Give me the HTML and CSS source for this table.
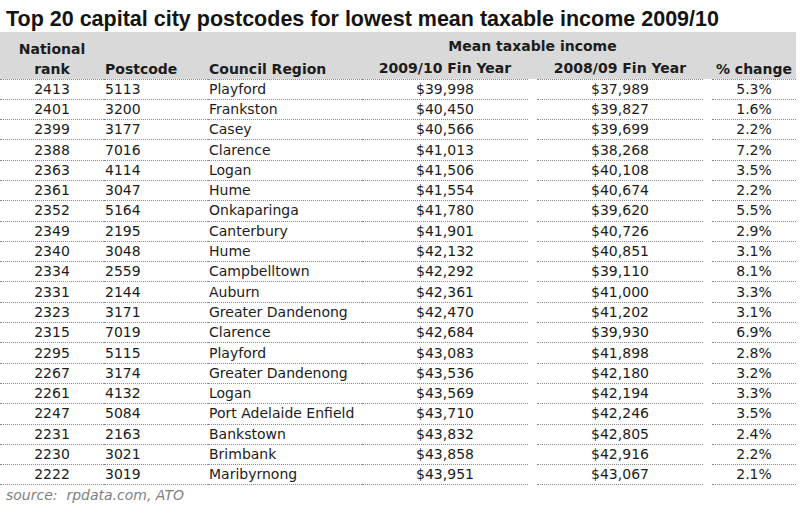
FILE: index.html
```
<!DOCTYPE html>
<html lang="en">
<head>
<meta charset="utf-8">
<title>Top 20 capital city postcodes</title>
<link rel="stylesheet" href="styles.css">
</head>
<body>
<h1 class="title">Top 20 capital city postcodes for lowest mean taxable income 2009/10</h1>
<table class="income">
  <colgroup>
    <col class="c-rank"><col class="c-post"><col class="c-council"><col class="c-money"><col class="c-gap"><col class="c-money"><col class="c-gap"><col class="c-change">
  </colgroup>
  <thead>
    <tr class="h1">
      <th rowspan="2" class="center bottom line">National<br>rank</th>
      <th rowspan="2" class="left bottom line">Postcode</th>
      <th rowspan="2" class="left bottom line">Council Region</th>
      <th colspan="3" class="center top mean">Mean taxable income</th>
      <th rowspan="2" class="gap"></th>
      <th rowspan="2" class="center bottom line">% change</th>
    </tr>
    <tr class="h2">
      <th class="center line">2009/10 Fin Year</th>
      <th class="gap"></th>
      <th class="center line">2008/09 Fin Year</th>
    </tr>
  </thead>
  <tbody id="rows">
    <tr><td class="center">2413</td><td>5113</td><td>Playford</td><td class="center">$39,998</td><td class="gap"></td><td class="center">$37,989</td><td class="gap"></td><td class="center">5.3%</td></tr>
    <tr><td class="center">2401</td><td>3200</td><td>Frankston</td><td class="center">$40,450</td><td class="gap"></td><td class="center">$39,827</td><td class="gap"></td><td class="center">1.6%</td></tr>
    <tr><td class="center">2399</td><td>3177</td><td>Casey</td><td class="center">$40,566</td><td class="gap"></td><td class="center">$39,699</td><td class="gap"></td><td class="center">2.2%</td></tr>
    <tr><td class="center">2388</td><td>7016</td><td>Clarence</td><td class="center">$41,013</td><td class="gap"></td><td class="center">$38,268</td><td class="gap"></td><td class="center">7.2%</td></tr>
    <tr><td class="center">2363</td><td>4114</td><td>Logan</td><td class="center">$41,506</td><td class="gap"></td><td class="center">$40,108</td><td class="gap"></td><td class="center">3.5%</td></tr>
    <tr><td class="center">2361</td><td>3047</td><td>Hume</td><td class="center">$41,554</td><td class="gap"></td><td class="center">$40,674</td><td class="gap"></td><td class="center">2.2%</td></tr>
    <tr><td class="center">2352</td><td>5164</td><td>Onkaparinga</td><td class="center">$41,780</td><td class="gap"></td><td class="center">$39,620</td><td class="gap"></td><td class="center">5.5%</td></tr>
    <tr><td class="center">2349</td><td>2195</td><td>Canterbury</td><td class="center">$41,901</td><td class="gap"></td><td class="center">$40,726</td><td class="gap"></td><td class="center">2.9%</td></tr>
    <tr><td class="center">2340</td><td>3048</td><td>Hume</td><td class="center">$42,132</td><td class="gap"></td><td class="center">$40,851</td><td class="gap"></td><td class="center">3.1%</td></tr>
    <tr><td class="center">2334</td><td>2559</td><td>Campbelltown</td><td class="center">$42,292</td><td class="gap"></td><td class="center">$39,110</td><td class="gap"></td><td class="center">8.1%</td></tr>
    <tr><td class="center">2331</td><td>2144</td><td>Auburn</td><td class="center">$42,361</td><td class="gap"></td><td class="center">$41,000</td><td class="gap"></td><td class="center">3.3%</td></tr>
    <tr><td class="center">2323</td><td>3171</td><td>Greater Dandenong</td><td class="center">$42,470</td><td class="gap"></td><td class="center">$41,202</td><td class="gap"></td><td class="center">3.1%</td></tr>
    <tr><td class="center">2315</td><td>7019</td><td>Clarence</td><td class="center">$42,684</td><td class="gap"></td><td class="center">$39,930</td><td class="gap"></td><td class="center">6.9%</td></tr>
    <tr><td class="center">2295</td><td>5115</td><td>Playford</td><td class="center">$43,083</td><td class="gap"></td><td class="center">$41,898</td><td class="gap"></td><td class="center">2.8%</td></tr>
    <tr><td class="center">2267</td><td>3174</td><td>Greater Dandenong</td><td class="center">$43,536</td><td class="gap"></td><td class="center">$42,180</td><td class="gap"></td><td class="center">3.2%</td></tr>
    <tr><td class="center">2261</td><td>4132</td><td>Logan</td><td class="center">$43,569</td><td class="gap"></td><td class="center">$42,194</td><td class="gap"></td><td class="center">3.3%</td></tr>
    <tr><td class="center">2247</td><td>5084</td><td>Port Adelaide Enfield</td><td class="center">$43,710</td><td class="gap"></td><td class="center">$42,246</td><td class="gap"></td><td class="center">3.5%</td></tr>
    <tr><td class="center">2231</td><td>2163</td><td>Bankstown</td><td class="center">$43,832</td><td class="gap"></td><td class="center">$42,805</td><td class="gap"></td><td class="center">2.4%</td></tr>
    <tr><td class="center">2230</td><td>3021</td><td>Brimbank</td><td class="center">$43,858</td><td class="gap"></td><td class="center">$42,916</td><td class="gap"></td><td class="center">2.2%</td></tr>
    <tr><td class="center">2222</td><td>3019</td><td>Maribyrnong</td><td class="center">$43,951</td><td class="gap"></td><td class="center">$43,067</td><td class="gap"></td><td class="center">2.1%</td></tr>
  </tbody>
</table>
<p class="source">source:&nbsp; rpdata.com, ATO</p>
</body>
</html>
```
FILE: styles.css
```
html, body {
  margin: 0;
  padding: 0;
  background: #ffffff;
}

body {
  width: 800px;
  height: 517px;
  overflow: hidden;
  font-family: "DejaVu Sans", Verdana, sans-serif;
  color: #1c1c1c;
}

.title {
  margin: 0;
  padding: 6px 0 0 6px;
  height: 26px;
  line-height: 26px;
  font-family: "Liberation Sans", Arial, sans-serif;
  font-size: 21.5px;
  font-weight: bold;
  color: #141414;
  white-space: nowrap;
}

.income {
  border-collapse: collapse;
  border-spacing: 0;
  table-layout: fixed;
  width: 796px;
  font-size: 14px;
}

.c-rank { width: 104px; }
.c-post { width: 104px; }
.c-council { width: 154px; }
.c-money { width: 166px; }
.c-gap { width: 9px; }
.c-change { width: 84px; }

.income th {
  background: #d9d9d9;
  font-weight: bold;
  line-height: 20px;
  padding: 0 0 0 1px;
  white-space: nowrap;
}

.income th.line {
  border-bottom: 1px dotted #8a8a8a;
}

.income .h1 { height: 26px; }
.income .h2 { height: 21px; }

.income th.mean {
  padding-top: 4px;
}

.income .top { vertical-align: top; }
.income .bottom { vertical-align: bottom; }

.income td {
  height: 19.3px;
  padding: 0 0 0 1px;
  line-height: 19px;
  border-bottom: 1px dotted #8a8a8a;
  white-space: nowrap;
  text-align: left;
}

.income .left { text-align: left; }
.income .center { text-align: center; padding-left: 0; }

.income td.gap {
  border-bottom: none;
  background: #ffffff;
}

.income th.gap {
  border-bottom: none;
}

.source {
  margin: 0;
  padding: 1px 0 0 6px;
  line-height: 18px;
  font-size: 14px;
  font-style: italic;
  color: #7f7f7f;
}
```
